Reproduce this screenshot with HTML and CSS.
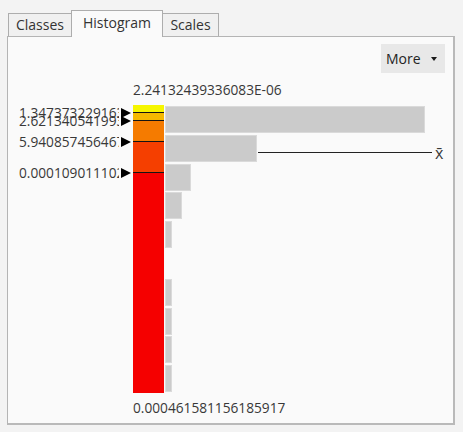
FILE: index.html
```html
<!DOCTYPE html>
<html>
<head>
<meta charset="utf-8">
<link rel="stylesheet" href="styles.css">
</head>
<body>
<div class="window">
  <div class="tabs">
    <div class="tab tab-classes">Classes</div>
    <div class="tab tab-histogram active">Histogram</div>
    <div class="tab tab-scales">Scales</div>
  </div>
  <div class="panel">
    <div class="toolbar">
      <button class="more">More<span class="caret"></span></button>
    </div>
    <div class="value value-top">2.24132439336083E-06</div>
    <div class="plot">
      <div class="colorbar">
        <div class="seg seg-1"></div>
        <div class="seg seg-2"></div>
        <div class="seg seg-3"></div>
        <div class="seg seg-4"></div>
        <div class="seg seg-5"></div>
        <div class="break" style="top:-1.5px"><span class="break-text">1.347373229163E-05</span><span class="pointer"></span></div>
        <div class="break" style="top:6.5px"><span class="break-text">2.621340541993E-05</span><span class="pointer"></span></div>
        <div class="break" style="top:27.5px"><span class="break-text">5.940857456467E-05</span><span class="pointer"></span></div>
        <div class="break" style="top:58.5px"><span class="break-text">0.000109011102</span><span class="pointer"></span></div>
      </div>
      <div class="hist">
        <div class="bin"><div class="bar" style="width:260px"></div></div>
        <div class="bin"><div class="bar" style="width:92px"></div></div>
        <div class="bin"><div class="bar" style="width:26px"></div></div>
        <div class="bin"><div class="bar" style="width:17px"></div></div>
        <div class="bin"><div class="bar" style="width:7px"></div></div>
        <div class="bin"></div>
        <div class="bin"><div class="bar" style="width:7px"></div></div>
        <div class="bin"><div class="bar" style="width:7px"></div></div>
        <div class="bin"><div class="bar" style="width:7px"></div></div>
        <div class="bin"><div class="bar" style="width:7px"></div></div>
        <div class="mean" style="top:47px; left:93px; width:174px"></div>
        <div class="mean-label" style="top:39px; left:270px">x̄</div>
      </div>
    </div>
    <div class="value value-bottom">0.000461581156185917</div>
  </div>
</div>
</body>
</html>
```
FILE: styles.css
```css
html, body {
  margin: 0;
  padding: 0;
}
body {
  background: #f3f3f3;
  font-family: "Open Sans", "Noto Sans", sans-serif;
  color: #383838;
  width: 463px;
  height: 432px;
  overflow: hidden;
}
.window {
  padding: 10px 0 0 7px;
}
.tabs {
  display: flex;
  align-items: flex-end;
  height: 27px;
  margin-left: 1px;
  margin-bottom: -1px;
  position: relative;
  z-index: 1;
}
.tab {
  box-sizing: border-box;
  height: 23px;
  margin-bottom: 1px;
  border: 1px solid #adadad;
  border-bottom: none;
  background: #f0f0f0;
  text-align: center;
  font-size: 14px;
  line-height: 22px;
  color: #333;
}
.tab + .tab {
  margin-left: -1px;
}
.tab-classes { width: 64px; }
.tab-histogram { width: 92px; }
.tab-scales { width: 57px; }
.tab.active {
  height: 27px;
  margin-bottom: 0;
  line-height: 24px;
  background: #fafafa;
  position: relative;
  z-index: 2;
}
.panel {
  box-sizing: border-box;
  width: 448px;
  height: 389px;
  border: 1px solid #b4b4b4;
  border-right: 2px solid #b9b9b9;
  border-bottom: 2px solid #b9b9b9;
  background: #fafafa;
  padding: 7px 8px 0 0;
  display: flex;
  flex-direction: column;
}
.toolbar {
  display: flex;
  justify-content: flex-end;
}
.more {
  box-sizing: border-box;
  width: 64px;
  height: 29px;
  border: none;
  margin: 0;
  background: #e8e8e8;
  display: flex;
  align-items: center;
  padding: 0 0 0 5px;
  font-family: "Open Sans", "Noto Sans", sans-serif;
  font-size: 14px;
  color: #232323;
}
.caret {
  width: 0;
  height: 0;
  margin-left: 10px;
  border-top: 4px solid #1a1a1a;
  border-left: 3.5px solid transparent;
  border-right: 3.5px solid transparent;
}
.value {
  margin-left: 125px;
  font-size: 13.7px;
  line-height: 18px;
  white-space: nowrap;
}
.value-top { margin-top: 8px; }
.value-bottom { margin-top: 6px; }
.plot {
  display: flex;
  margin-left: 125px;
  margin-top: 6px;
  height: 288px;
}
.colorbar {
  width: 31px;
  flex: none;
  position: relative;
  display: flex;
  flex-direction: column;
}
.seg {
  box-sizing: border-box;
  flex: none;
}
.seg + .seg { border-top: 1px solid #141414; }
.seg-1 { height: 7px; background: #f6f600; }
.seg-2 { height: 8px; background: #f5b900; }
.seg-3 { height: 21px; background: #f57b00; }
.seg-4 { height: 31px; background: #f53f00; }
.seg-5 { height: 221px; background: #f50000; }
.break {
  position: absolute;
  right: calc(100% + 2px);
  height: 18px;
  display: flex;
  align-items: center;
}
.break-text {
  width: 100px;
  overflow: hidden;
  white-space: nowrap;
  font-size: 13.7px;
  line-height: 18px;
}
.pointer {
  width: 0;
  height: 0;
  margin-left: 2px;
  border-left: 10px solid #000;
  border-top: 5px solid transparent;
  border-bottom: 5px solid transparent;
}
.hist {
  flex: 1;
  margin-left: 1px;
  position: relative;
  display: flex;
  flex-direction: column;
}
.bin {
  height: 28.8px;
  flex: none;
}
.bar {
  box-sizing: border-box;
  height: 27px;
  margin-top: 1px;
  background: #cbcbcb;
  border: 1px solid #dadada;
}
.mean {
  position: absolute;
  height: 1px;
  background: #222;
}
.mean-label {
  position: absolute;
  font-size: 16px;
  line-height: 18px;
  color: #383838;
}
```
